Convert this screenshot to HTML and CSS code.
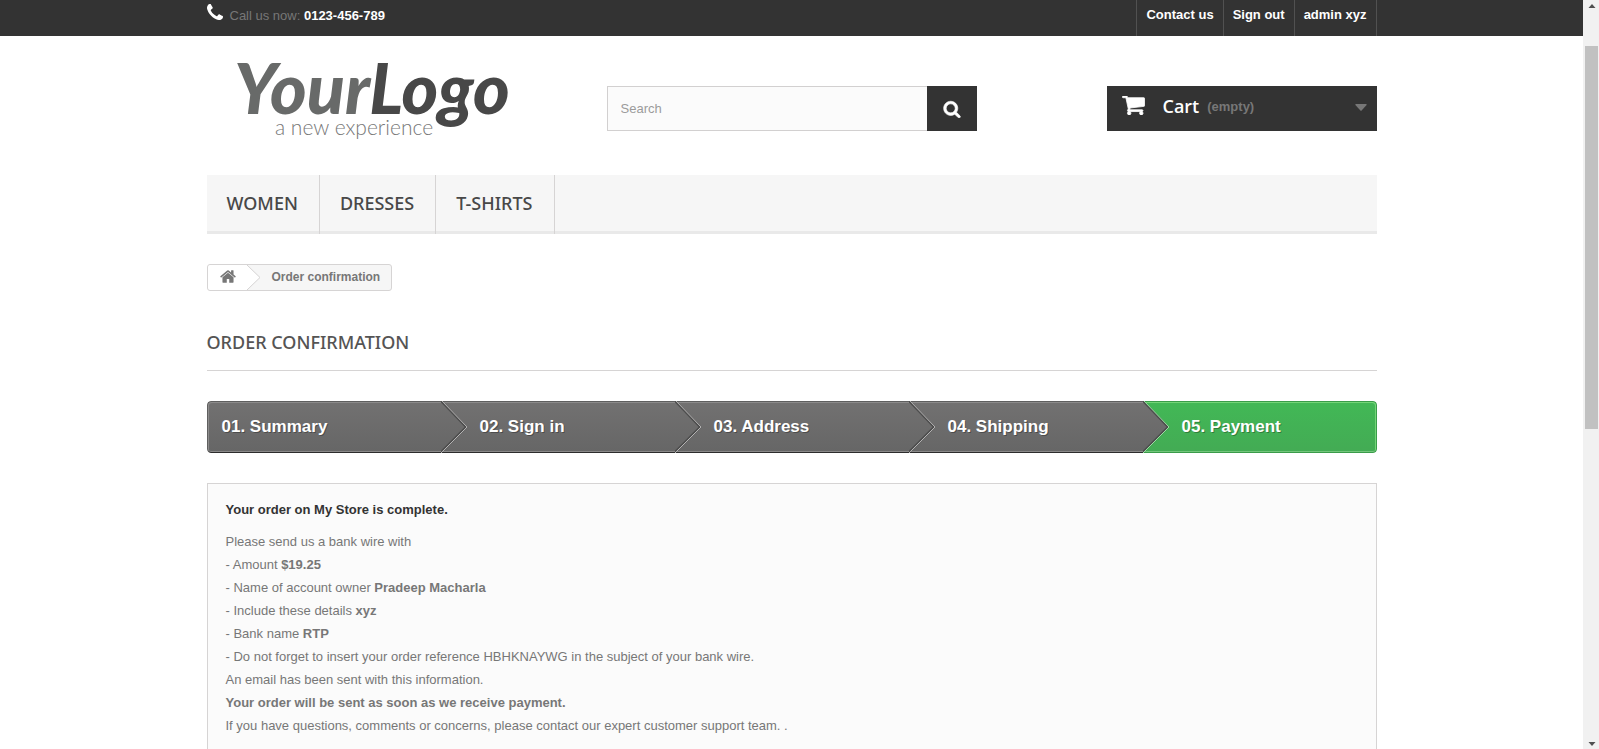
FILE: index.html
```html
<!DOCTYPE html>
<html lang="en">
<head>
<meta charset="utf-8">
<title>Order confirmation - My Store</title>
<link rel="stylesheet" href="styles.css">
</head>
<body>
<div class="viewport">
<div class="page">
  <div class="topbar">
    <div class="container topbar-row">
      <p class="phone">
        <svg class="phone-icon" viewBox="0 128 1408 1408" aria-hidden="true"><path d="M1408 1240q0 27-10 70.500t-21 68.500q-21 50-122 106-94 51-186 51-27 0-53-3.500t-57.500-12.500-47-14.500-55.500-20.500-49-18q-98-35-175-83-127-79-264-216t-216-264q-48-77-83-175-3-9-18-49t-20.500-55.500-14.500-47-12.500-57.500-3.500-53q0-92 51-186 56-101 106-122 25-11 68.500-21t70.500-10q14 0 21 3 18 6 53 76 11 19 30 54t35 63.500 31 53.500q3 4 17.500 25t21.500 35.500 7 28.500q0 20-28.500 50t-62 55-62 53-28.500 46q0 9 5 22.500t8.500 20.500 14 24 11.500 19q76 137 174 235t235 174q2 1 19 11.500t24 14 20.500 8.500 22.500 5q18 0 46-28.500t53-62 55-62 50-28.500q14 0 28.500 7t35.500 21.500 25 17.500q25 15 53.500 31t63.500 35 54 30q70 35 76 53 3 7 3 21z"/></svg>
        <span>Call us now: <strong>0123-456-789</strong></span>
      </p>
      <nav class="user-nav" aria-label="Account">
        <a href="#">Contact us</a>
        <a href="#">Sign out</a>
        <a href="#">admin xyz</a>
      </nav>
    </div>
  </div>

  <div class="container">
    <header class="header">
      <a class="logo" href="#" aria-label="Your Logo, a new experience">
        <svg viewBox="0 0 370 85">
          <text class="logo-name" x="27" y="54">Your<tspan class="logo-dark">Logo</tspan></text>
          <text class="logo-tag" x="68" y="75">a new experience</text>
        </svg>
      </a>
      <form class="search" role="search">
        <input type="text" placeholder="Search" aria-label="Search">
        <button type="button" aria-label="Search">
          <svg viewBox="0 0 1792 1792" aria-hidden="true"><path d="M1216 832q0-185-131.500-316.500t-316.500-131.500-316.500 131.500-131.500 316.500 131.500 316.500 316.500 131.500 316.500-131.500 131.500-316.500zm512 832q0 52-38 90t-90 38q-54 0-90-38l-343-342q-179 124-399 124-143 0-273.500-55.500t-225-150-150-225-55.500-273.500 55.500-273.500 150-225 225-150 273.500-55.500 273.500 55.500 225 150 150 225 55.500 273.500q0 220-124 399l343 343q37 37 37 90z"/></svg>
        </button>
      </form>
      <a class="cart" href="#">
        <svg class="cart-icon" viewBox="64 256 1664 1408" aria-hidden="true"><path d="M704 1536q0 52-38 90t-90 38-90-38-38-90 38-90 90-38 90 38 38 90zm896 0q0 52-38 90t-90 38-90-38-38-90 38-90 90-38 90 38 38 90zm128-1088v512q0 24-16.500 42.500t-40.500 21.500l-1044 122q13 60 13 70 0 16-24 64h920q26 0 45 19t19 45-19 45-45 19h-1024q-26 0-45-19t-19-45q0-11 8-31.500t16-36 21.500-40 15.500-29.500l-177-823h-204q-26 0-45-19t-19-45 19-45 45-19h256q16 0 28.500 6.500t19.500 15.500 13 24.500 8 26 5.500 29.500 4.500 26h1201q26 0 45 19t19 45z"/></svg>
        <b>Cart</b>
        <span class="cart-state">(empty)</span>
        <svg class="cart-caret" viewBox="0 0 12 7" aria-hidden="true"><path d="M1 0h10q1 0 .6 1L6.600 6.500q-.6.500-1.200 0L.4 1Q0 0 1 0z"/></svg>
      </a>
    </header>

    <nav class="menu" aria-label="Categories">
      <a href="#">Women</a>
      <a href="#">Dresses</a>
      <a href="#">T-shirts</a>
    </nav>

    <nav class="breadcrumb" aria-label="Breadcrumb">
      <a class="crumb-home" href="#" aria-label="Home">
        <svg viewBox="64 256 1664 1280" aria-hidden="true"><path d="M1472 992v480q0 26-19 45t-45 19h-384v-384h-256v384h-384q-26 0-45-19t-19-45v-480q0-1 .5-3t.5-3l575-474 575 474q1 2 1 6zm223-69l-62 74q-8 9-21 11h-3q-13 0-21-7l-692-577-692 577q-12 8-24 7-13-2-21-11l-62-74q-8-10-7-23.500t11-21.500l719-599q32-26 76-26t76 26l244 204v-195q0-14 9-23t23-9h192q14 0 23 9t9 23v408l219 182q10 8 11 21.500t-7 23.500z"/></svg>
      </a>
      <svg class="crumb-arrow" viewBox="0 0 14 24" aria-hidden="true"><path class="crumb-fill" d="M0 0L13 12L0 24z"/><path class="crumb-line" d="M0 -.5L13 12L0 24.500"/></svg>
      <span class="crumb-page">Order confirmation</span>
    </nav>

    <h1 class="title">Order confirmation</h1>

    <ol class="steps">
      <li><a href="#">01. Summary</a></li>
      <li>
        <svg class="step-arrow" viewBox="0 0 28 52" aria-hidden="true"><path class="arrow-fill" d="M0 1L25 26L0 51z"/><path class="arrow-shade" d="M0 0L25 26L0 51"/><path class="arrow-line" d="M1 0L26 26L0 52"/></svg>
        <a href="#">02. Sign in</a>
      </li>
      <li>
        <svg class="step-arrow" viewBox="0 0 28 52" aria-hidden="true"><path class="arrow-fill" d="M0 1L25 26L0 51z"/><path class="arrow-shade" d="M0 0L25 26L0 51"/><path class="arrow-line" d="M1 0L26 26L0 52"/></svg>
        <a href="#">03. Address</a>
      </li>
      <li>
        <svg class="step-arrow" viewBox="0 0 28 52" aria-hidden="true"><path class="arrow-fill" d="M0 1L25 26L0 51z"/><path class="arrow-shade" d="M0 0L25 26L0 51"/><path class="arrow-line" d="M1 0L26 26L0 52"/></svg>
        <a href="#">04. Shipping</a>
      </li>
      <li class="current" aria-current="step">
        <svg class="step-arrow" viewBox="0 0 28 52" aria-hidden="true">
          <defs><linearGradient id="step-grey" x1="0" y1="0" x2="0" y2="1"><stop offset="0" stop-color="#727171"/><stop offset="1" stop-color="#666666"/></linearGradient></defs>
          <path class="arrow-fill" d="M0 1L25 26L0 51z"/><path class="arrow-shade" d="M0 0L25 26L0 51"/><path class="arrow-line" d="M1 0L26 26L0 52"/></svg>
        <span>05. Payment</span>
      </li>
    </ol>

    <section class="box">
      <p class="box-title">Your order on My Store is complete.</p>
      <p>Please send us a bank wire with<br>
      - Amount <strong>$19.25</strong><br>
      - Name of account owner <strong>Pradeep Macharla</strong><br>
      - Include these details <strong>xyz</strong><br>
      - Bank name <strong>RTP</strong><br>
      - Do not forget to insert your order reference HBHKNAYWG in the subject of your bank wire.<br>
      An email has been sent with this information.<br>
      <strong>Your order will be sent as soon as we receive payment.</strong><br>
      If you have questions, comments or concerns, please contact our <a href="#">expert customer support team.</a> .</p>
    </section>
  </div>
</div>
<div class="scrollbar" aria-hidden="true">
  <svg viewBox="0 0 7 4"><path d="M0 4L3.500 0L7 4z"/></svg>
  <div class="track"><div class="thumb"></div></div>
  <svg viewBox="0 0 7 4"><path d="M0 0L3.500 4L7 0z"/></svg>
</div>
</div>
</body>
</html>
```
FILE: styles.css
```css
* {
  box-sizing: border-box;
}

body {
  margin: 0;
  background: #fff;
  color: #777;
  font: 13px/18px "Liberation Sans", Arial, sans-serif;
}

a {
  color: inherit;
  text-decoration: none;
}

p {
  margin: 0;
}

.viewport {
  display: flex;
  height: 100vh;
  overflow: hidden;
}

.page {
  flex: 1;
  overflow: hidden;
}

.container {
  max-width: 1170px;
  margin: 0 auto;
}

/* Top bar */
.topbar {
  background: #333;
}

.topbar-row {
  display: flex;
  justify-content: space-between;
}

.phone {
  display: flex;
  gap: 7px;
  padding: 7px 0 11px;
}

.phone strong {
  color: #fff;
}

.phone-icon {
  width: 16px;
  height: 16px;
  margin-top: -3px;
  fill: #fff;
}

.user-nav {
  display: flex;
  border-left: 1px solid #515151;
}

.user-nav a {
  padding: 6px 9px 12px;
  border-right: 1px solid #515151;
  color: #fff;
  font-weight: bold;
}

/* Header */
.header {
  display: grid;
  grid-template-columns: repeat(3, 1fr);
  gap: 30px;
  padding: 24px 0 30px;
}

.logo svg {
  display: block;
  width: 100%;
  overflow: visible;
}

.logo-name {
  fill: #686a69;
  font: italic 900 70px Lato, sans-serif;
}

.logo-dark {
  fill: #484848;
}

.logo-tag {
  fill: #777;
  font: 300 21px Lato, sans-serif;
}

.search {
  display: flex;
  height: 45px;
  margin-top: 26px;
}

.search input {
  flex: 1;
  min-width: 0;
  padding: 0 13px;
  border: 1px solid #d2d0d0;
  border-right: 0;
  border-radius: 0;
  background: #fbfbfb;
  font: inherit;
}

.search input::placeholder {
  color: #9c9b9b;
}

.search button {
  display: grid;
  place-items: center;
  width: 50px;
  padding: 0;
  border: 0;
  background: #333;
}

.search button svg {
  width: 18px;
  height: 18px;
  fill: #fff;
  stroke: #fff;
  stroke-width: 60px;
}

.cart {
  display: flex;
  align-items: center;
  justify-self: end;
  width: 270px;
  height: 45px;
  margin-top: 26px;
  padding: 0 10px 6px 15px;
  background: #333;
  font-weight: bold;
}

.cart b {
  margin: 0 8px 0 18px;
  color: #fff;
  font: 600 18px/24px "Open Sans", sans-serif;
}

.cart-icon {
  width: 23px;
  height: 19px;
  fill: #fff;
  stroke: #fff;
  stroke-width: 60px;
}

.cart-state {
  padding-top: 3px;
}

.cart-caret {
  width: 12px;
  height: 7px;
  margin: 4px 0 0 auto;
  fill: #777;
}

/* Category menu */
.menu {
  display: flex;
  background: #f6f6f6;
  box-shadow: inset 0 -3px #e9e9e9;
}

.menu a {
  padding: 16px 21px 19px 20px;
  border-right: 1px solid #d6d4d4;
  color: #484848;
  font: 500 18px/24px "Noto Sans", "Open Sans", sans-serif;
  text-transform: uppercase;
}

/* Breadcrumb */
.breadcrumb {
  display: flex;
  width: fit-content;
  height: 27px;
  margin-top: 30px;
  border: 1px solid #d6d4d4;
  border-radius: 3px;
  background: #f6f6f6;
  font-size: 12px;
  font-weight: bold;
  line-height: 24px;
}

.crumb-home {
  display: flex;
  align-items: center;
  padding: 0 11px 2px 12px;
  border-radius: 3px 0 0 3px;
  background: #fff;
}

.crumb-home svg {
  width: 16px;
  height: 13px;
  fill: #777;
}

.crumb-arrow {
  width: 14px;
  height: 25px;
}

.crumb-fill {
  fill: #fff;
}

.crumb-line {
  fill: none;
  stroke: #d6d4d4;
}

.crumb-page {
  padding: 0 11px;
}

/* Page title */
.title {
  margin: 39px 0 30px;
  padding-bottom: 16px;
  border-bottom: 1px solid #d6d4d4;
  color: #555454;
  font: 500 18px/24px "Noto Sans", "Open Sans", sans-serif;
  text-transform: uppercase;
}

/* Order steps */
.steps {
  display: grid;
  grid-template-columns: repeat(5, 1fr);
  margin: 0 0 30px;
  padding: 0;
  overflow: hidden;
  border-radius: 4px;
  list-style: none;
}

.steps li {
  position: relative;
  height: 52px;
  padding-left: 39px;
  border-top: 1px solid #5f5f5f;
  border-bottom: 1px solid #2c2c2c;
  background: linear-gradient(#727171, #666);
  box-shadow: inset 0 1px #8c8b8b, inset 0 -1px #8a8989;
  color: #fff;
  font-size: 17px;
  font-weight: bold;
  line-height: 50px;
  text-shadow: 1px 1px rgba(0, 0, 0, 0.3);
}

.steps li:first-child {
  padding-left: 14px;
  border-left: 1px solid #5f5f5f;
  border-radius: 4px 0 0 4px;
  box-shadow: inset 1px 1px #8c8b8b, inset 0 -1px #8a8989;
}

.steps .current {
  border: 1px solid #3a9c4a;
  border-left: 0;
  border-radius: 0 4px 4px 0;
  background: linear-gradient(#42b856, #43ab54);
  box-shadow: inset -1px 1px #74d578, inset 0 -1px #74c67c;
}

.step-arrow {
  position: absolute;
  top: -1px;
  left: 0;
  width: 28px;
  height: 52px;
}

.arrow-fill {
  fill: url(#step-grey);
}

.arrow-shade {
  fill: none;
  stroke: #4d4d4d;
  stroke-width: 2px;
}

.arrow-line {
  fill: none;
  stroke: #b4b3b3;
}

.current .arrow-line {
  stroke: #9cdca4;
}

/* Confirmation box */
.box {
  padding: 14px 18px 18px 18px;
  border: 1px solid #d6d4d4;
  background: #fbfbfb;
  line-height: 23px;
}

.box-title {
  margin-bottom: 9px;
  color: #333;
  font-weight: bold;
}

/* Scrollbar */
.scrollbar {
  display: flex;
  flex-direction: column;
  align-items: center;
  width: 16px;
  padding: 4px 1px 3px 2px;
  background: #f1f1f1;
}

.scrollbar svg {
  width: 8px;
  height: 4px;
  fill: #505050;
}

.track {
  flex: 1;
  width: 100%;
  padding: 38px 0 0;
}

.thumb {
  height: 55%;
  background: #c1c1c1;
}
```
